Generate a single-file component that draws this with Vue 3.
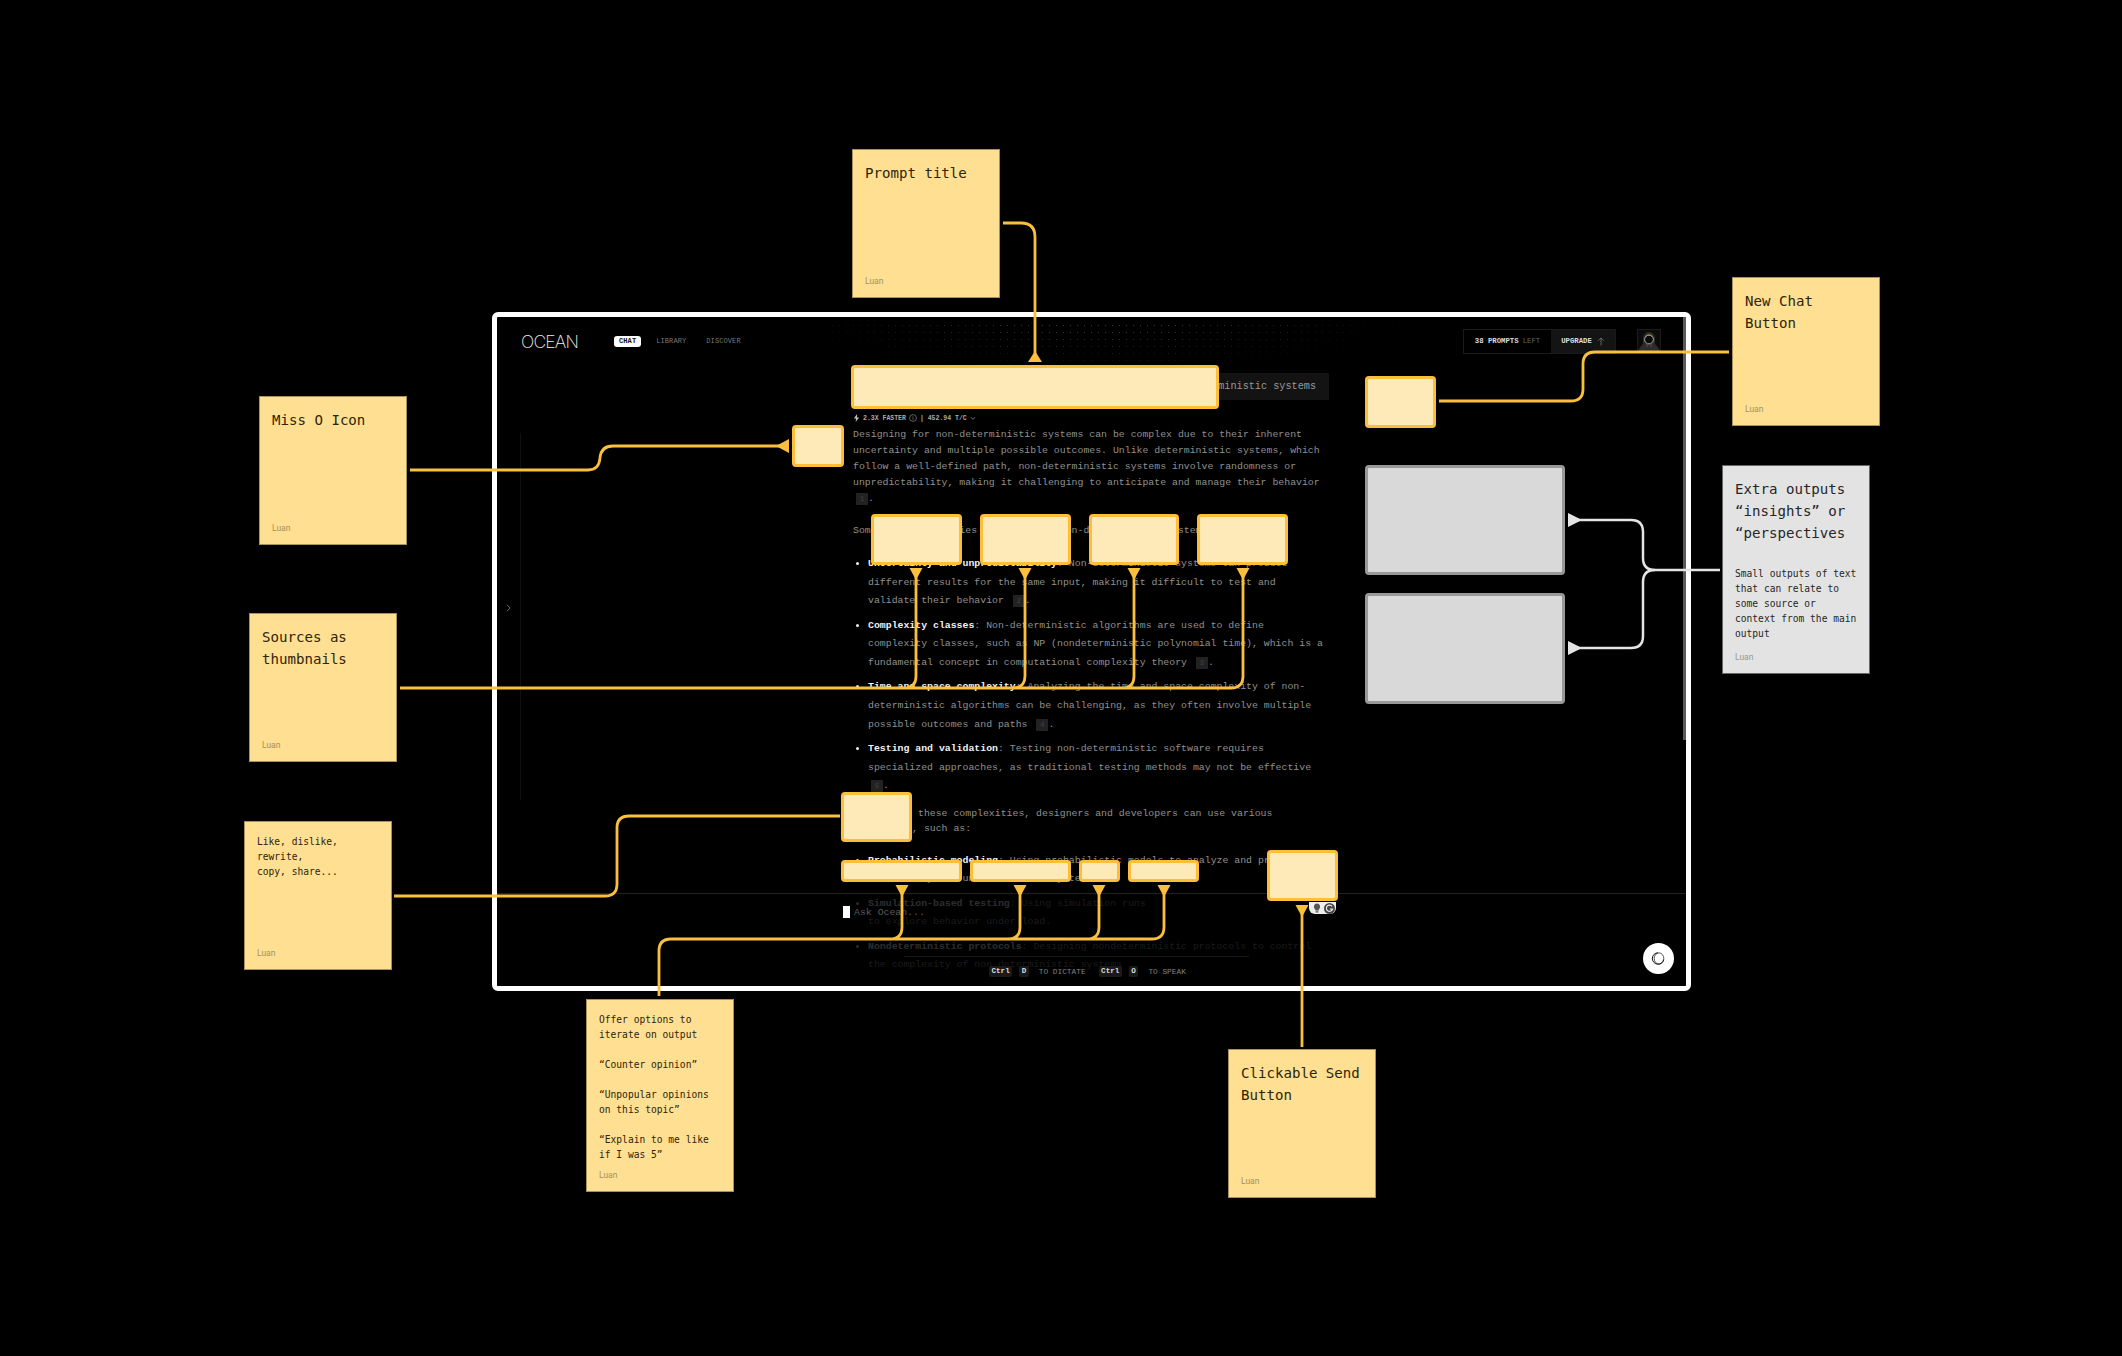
<template>
  <div class="board">
    <div class="window">
      <header class="topbar">
        <div class="logo">OCEAN</div>
        <nav class="nav">
          <a class="nav-item active">CHAT</a>
          <a class="nav-item">LIBRARY</a>
          <a class="nav-item">DISCOVER</a>
        </nav>
        <div class="usage">
          <div class="prompts"><b>38 PROMPTS</b> LEFT</div>
          <div class="upgrade">
            UPGRADE
            <svg width="8" height="9" viewBox="0 0 8 9" fill="none" stroke="#777" stroke-width="0.8"><path d="M4 8.5V1M1.2 3.6 4 1l2.8 2.6" /></svg>
          </div>
        </div>
        <svg class="avatar" width="24" height="24" viewBox="0 0 24 24" fill="none">
          <rect x="0.5" y="0.5" width="23" height="23" fill="#0b0b0b" stroke="#1c1c1c" />
          <path d="M1 24c1-6 4-8 5-9V9a6 6 0 0 1 12 0v6c1 1 4 3 5 9z" fill="#2c2c2c" />
          <circle cx="12" cy="10.5" r="4.4" fill="#0b0b0b" stroke="#a8a8a8" stroke-width="1" />
          <path d="M8.4 7.6A4.8 4.8 0 0 1 15.6 7.6" stroke="#b08a3a" stroke-width="1" />
          <path d="M10 14v4M14 14v4" stroke="#555" stroke-width="1" />
        </svg>
      </header>

      <div class="dots"></div>

      <div class="main">
        <aside class="rail">
          <svg width="5" height="8" viewBox="0 0 5 8" fill="none" stroke="#666" stroke-width="1"><path d="M1 .8 4 4 1 7.2" /></svg>
        </aside>

        <section class="thread">
          <div class="prompt-title">Designing for non-deterministic systems</div>
          <div class="stats">
            <svg width="7" height="8" viewBox="0 0 7 8" fill="#bbb"><path d="M4 0 .8 4.5H3L2.6 8 6.2 3.4H4z" /></svg>
            <span>2.3X FASTER</span>
            <svg width="8" height="8" viewBox="0 0 8 8" fill="none" stroke="#888" stroke-width="0.7"><circle cx="4" cy="4" r="3.4" /><path d="M4 3.4v2.4M4 2v.7" /></svg>
            <span>| 452.94 T/C</span>
            <svg width="6" height="5" viewBox="0 0 6 5" fill="none" stroke="#888" stroke-width="0.8"><path d="M1 1.2 3 3.4 5 1.2" /></svg>
          </div>

          <p class="para">
            Designing for non-deterministic systems can be complex due to their inherent uncertainty and multiple possible outcomes. Unlike deterministic systems, which follow a well-defined path, non-deterministic systems involve randomness or unpredictability, making it challenging to anticipate and manage their behavior <span class="cite">1</span>.
          </p>
          <p class="para lead">Some key complexities in designing non-deterministic systems include:</p>

          <ul class="points">
            <li v-for="item in challenges" :key="item.name">
              <strong>{{ item.name }}</strong>: {{ item.text }} <span class="cite">{{ item.cite }}</span>.
            </li>
          </ul>

          <p class="para lead-two">To address these complexities, designers and developers can use various techniques, such as:</p>

          <ul class="points second-list">
            <li><strong>Probabilistic modeling</strong>: Using probabilistic models to analyze and predict the uncertainty and understand the system.</li>
            <li><strong>Simulation-based testing</strong>: Using simulation runs<br />to explore behavior under load.</li>
            <li><strong>Nondeterministic protocols</strong>: Designing nondeterministic protocols to control the complexity of non-deterministic systems</li>
          </ul>
        </section>
      </div>

      <div class="scrollbar"></div>

      <footer class="composer">
        <div class="ask"><span class="cursor"></span>Ask Ocean...</div>
        <div class="hints">
          <kbd>Ctrl</kbd><kbd>D</kbd><span class="hint-text">TO DICTATE</span>
          <kbd class="second">Ctrl</kbd><kbd>O</kbd><span class="hint-text">TO SPEAK</span>
        </div>
        <button class="new-circle">
          <svg width="15" height="15" viewBox="0 0 15 15" fill="none" stroke="#111" stroke-width="1"><path d="M7 1.8a5.7 5.7 0 1 0 5.6 6.9" /><ellipse cx="8" cy="7.5" rx="4.8" ry="5.6" stroke-width="0.7" /></svg>
        </button>
      </footer>
    </div>

    <!-- annotation cut-outs laid over the product shot -->
    <div
      v-for="box in masks"
      :key="box.id"
      class="mask"
      :class="{ grey: box.grey }"
      :style="{ left: box.x + 'px', top: box.y + 'px', width: box.w + 'px', height: box.h + 'px' }"
    ></div>

    <div class="tools">
      <svg width="10" height="10" viewBox="0 0 10 10" fill="#555"><path d="M5 .6a3.2 3.2 0 0 0-1.8 5.8V7.6h3.6V6.4A3.2 3.2 0 0 0 5 .6zM3.6 8.2h2.8v1.2H3.6z" /></svg>
      <svg width="11" height="11" viewBox="0 0 11 11"><circle cx="5.5" cy="5.5" r="5.5" fill="#444" /><path d="M8 3.4A3.1 3.1 0 1 0 8.5 6H5.8" fill="none" stroke="#eee" stroke-width="1.2" /></svg>
    </div>

    <svg class="wires" width="2122" height="1356" viewBox="0 0 2122 1356" fill="none">
      <g stroke="#fbbf40" stroke-width="2.8">
        <path d="M1003 223H1021Q1035 223 1035 237V354" />
        <path d="M410 470H588Q599 470 600 458Q601 446 613 446H780" />
        <path d="M1439 401H1571Q1583 401 1583 389V364Q1583 352 1595 352H1729" />
        <path d="M400 688H904Q916 688 916 676V572M904 688H1013Q1025 688 1025 676V572M1013 688H1122Q1134 688 1134 676V572M1122 688H1231Q1243 688 1243 676V572" />
        <path d="M394 896H605Q617 896 617 884V828Q617 816 629 816H840" />
        <path d="M659 996V951Q659 939 671 939H890Q902 939 902 927V890M890 939H1008Q1020 939 1020 927V890M1008 939H1087Q1099 939 1099 927V890M1087 939H1152Q1164 939 1164 927V890" />
        <path d="M1302 1047V910" />
      </g>
      <g fill="#fbbf40">
        <polygon points="1035,351 1028,362 1042,362" />
        <polygon points="776,446 789,439 789,453" />
        <polygon v-for="x in [916, 1025, 1134, 1243]" :key="x" :points="`${x - 6.5},568 ${x + 6.5},568 ${x},580`" />
        <polygon v-for="x in [902, 1020, 1099, 1164]" :key="x" :points="`${x - 6.5},885 ${x + 6.5},885 ${x},897`" />
        <polygon points="1295.5,905 1308.5,905 1302,917" />
      </g>
      <g stroke="#e4e4e4" stroke-width="2.5">
        <path d="M1720 570H1655Q1643 570 1643 558V532Q1643 520 1631 520H1578" />
        <path d="M1655 570Q1643 570 1643 582V636Q1643 648 1631 648H1578" />
      </g>
      <g fill="#e4e4e4">
        <polygon points="1568,513 1568,527 1582,520" />
        <polygon points="1568,641 1568,655 1582,648" />
      </g>
    </svg>

    <div
      v-for="note in notes"
      :key="note.id"
      class="sticky"
      :class="{ grey: note.grey }"
      :style="{ left: note.x + 'px', top: note.y + 'px', height: note.h + 'px' }"
    >
      <div v-if="note.title" class="sticky-title">{{ note.title }}</div>
      <div v-if="note.body" class="sticky-body" :class="{ spaced: note.title }">{{ note.body }}</div>
      <div class="sticky-author">Luan</div>
    </div>
  </div>
</template>

<script setup>
const challenges = [
  {
    name: 'Uncertainty and unpredictability',
    text: 'Non-deterministic systems can produce different results for the same input, making it difficult to test and validate their behavior',
    cite: 2,
  },
  {
    name: 'Complexity classes',
    text: 'Non-deterministic algorithms are used to define complexity classes, such as NP (nondeterministic polynomial time), which is a fundamental concept in computational complexity theory',
    cite: 3,
  },
  {
    name: 'Time and space complexity',
    text: 'Analyzing the time and space complexity of non-deterministic algorithms can be challenging, as they often involve multiple possible outcomes and paths',
    cite: 4,
  },
  {
    name: 'Testing and validation',
    text: 'Testing non-deterministic software requires specialized approaches, as traditional testing methods may not be effective',
    cite: 5,
  },
]

const masks = [
  { id: 'title', x: 851, y: 365, w: 368, h: 44 },
  { id: 'icon', x: 792, y: 425, w: 52, h: 42 },
  { id: 's1', x: 871, y: 514, w: 91, h: 51 },
  { id: 's2', x: 980, y: 514, w: 91, h: 51 },
  { id: 's3', x: 1089, y: 514, w: 90, h: 51 },
  { id: 's4', x: 1197, y: 514, w: 91, h: 51 },
  { id: 'new', x: 1365, y: 376, w: 71, h: 52 },
  { id: 'actions', x: 841, y: 792, w: 71, h: 50 },
  { id: 'o1', x: 841, y: 860, w: 121, h: 22 },
  { id: 'o2', x: 970, y: 860, w: 101, h: 22 },
  { id: 'o3', x: 1079, y: 860, w: 41, h: 22 },
  { id: 'o4', x: 1128, y: 860, w: 71, h: 22 },
  { id: 'send', x: 1267, y: 850, w: 71, h: 51 },
  { id: 'g1', x: 1365, y: 465, w: 200, h: 110, grey: true },
  { id: 'g2', x: 1365, y: 593, w: 200, h: 111, grey: true },
]

const notes = [
  { id: 1, x: 852, y: 149, h: 149, title: 'Prompt title' },
  { id: 2, x: 1732, y: 277, h: 149, title: 'New Chat\nButton' },
  { id: 3, x: 259, y: 396, h: 149, title: 'Miss O Icon' },
  { id: 4, x: 249, y: 613, h: 149, title: 'Sources as\nthumbnails' },
  { id: 5, x: 244, y: 821, h: 149, body: 'Like, dislike,\nrewrite,\ncopy, share...' },
  {
    id: 6,
    x: 586,
    y: 999,
    h: 193,
    body: 'Offer options to\niterate on output\n\n“Counter opinion”\n\n“Unpopular opinions\non this topic”\n\n“Explain to me like\nif I was 5”',
  },
  { id: 7, x: 1228, y: 1049, h: 149, title: 'Clickable Send\nButton' },
  {
    id: 8,
    x: 1722,
    y: 465,
    h: 209,
    grey: true,
    title: 'Extra outputs\n“insights” or\n“perspectives',
    body: 'Small outputs of text\nthat can relate to\nsome source or\ncontext from the main\noutput',
  },
]
</script>

<style>
html,
body {
  background: #000;
}
</style>

<style scoped>
.board {
  position: relative;
  width: 2122px;
  height: 1356px;
  overflow: hidden;
  background: #000;
  font-family: "Liberation Mono", monospace;
}

.window {
  position: absolute;
  left: 492px;
  top: 312px;
  width: 1199px;
  height: 679px;
  box-sizing: border-box;
  border: 5px solid #fff;
  border-radius: 6px;
  overflow: hidden;
  display: flex;
  flex-direction: column;
  background: #000;
}

.topbar {
  height: 48px;
  flex-shrink: 0;
  padding: 0 25px 0 24px;
  display: flex;
  align-items: center;
}

.logo {
  width: 57px;
  font-family: Inter, "Liberation Sans", sans-serif;
  font-size: 17.5px;
  font-weight: 200;
  letter-spacing: -0.8px;
  white-space: nowrap;
  color: #eee;
}

.nav {
  margin: 1px 0 0 36px;
  display: flex;
  gap: 10px;
}

.nav-item {
  height: 11px;
  line-height: 11px;
  padding: 0 5px;
  border-radius: 3px;
  font-size: 7px;
  letter-spacing: 0.1px;
  color: #777;
}

.nav-item.active {
  background: #fff;
  color: #111;
  font-weight: 700;
}

.usage {
  margin-left: auto;
  height: 25px;
  display: flex;
  font-size: 7.3px;
  border: 1px solid #1a1a1a;
  box-sizing: border-box;
}

.prompts {
  width: 87px;
  display: flex;
  align-items: center;
  justify-content: center;
  gap: 4px;
  color: #666;
}

.prompts b {
  color: #ddd;
}

.upgrade {
  width: 64px;
  background: #141414;
  color: #ddd;
  font-weight: 700;
  display: flex;
  align-items: center;
  justify-content: center;
  gap: 5px;
}

.avatar {
  margin-left: 21px;
  margin-bottom: 1px;
}

.dots {
  position: absolute;
  left: 283px;
  top: 5px;
  width: 640px;
  height: 48px;
  background-image: radial-gradient(#3a3a3a 0.6px, transparent 0.8px);
  background-size: 7px 7px;
  -webkit-mask-image: radial-gradient(ellipse at 50% 0, #000 15%, transparent 72%);
  mask-image: radial-gradient(ellipse at 50% 0, #000 15%, transparent 72%);
}

.main {
  flex: 1;
  display: flex;
  min-height: 0;
}

.rail {
  width: 24px;
  height: 367px;
  margin-top: 68px;
  padding-top: 171px;
  box-sizing: border-box;
  border-right: 1px solid #101010;
  flex-shrink: 0;
  display: flex;
  align-items: flex-start;
  justify-content: center;
}

.thread {
  width: 476px;
  margin-left: 332px;
  padding-top: 8px;
  font-size: 9.85px;
  color: #909090;
}

.prompt-title {
  height: 27px;
  line-height: 27px;
  padding-right: 13px;
  background: #131313;
  text-align: right;
  font-size: 10.2px;
  color: #999;
}

.stats {
  margin-top: 12px;
  height: 12px;
  display: flex;
  align-items: center;
  gap: 3px;
  font-size: 6.5px;
  font-weight: 700;
  color: #aaa;
}

.para {
  margin: 3.4px 0 0;
  line-height: 15.8px;
}

.lead {
  margin-top: 17px;
}

.lead-two {
  margin-top: 10px;
}

.points {
  margin: 16px 0 0;
  padding: 0 4px 0 15px;
  line-height: 18.6px;
}

.second-list {
  margin-top: 14.5px;
}

.points li {
  margin-bottom: 5.8px;
}

.points li::marker {
  color: #eee;
}

.points strong {
  color: #f2f2f2;
}

.cite {
  display: inline-block;
  width: 12px;
  height: 12px;
  line-height: 12px;
  margin-left: 3px;
  background: #222;
  text-align: center;
  font-size: 7px;
  color: #444;
}

.scrollbar {
  position: absolute;
  right: 0;
  top: 0;
  width: 3px;
  height: 423px;
  background: #5a5a5a;
}

.composer {
  position: absolute;
  left: 0;
  right: 0;
  bottom: 0;
  height: 93px;
  box-sizing: border-box;
  padding-top: 12px;
  border-top: 1px solid #222;
  background: rgba(0, 0, 0, 0.82);
}

.ask {
  margin-left: 346px;
  height: 12px;
  display: flex;
  align-items: center;
  gap: 4px;
  font-size: 9.85px;
  color: #5c5c5c;
}

.cursor {
  width: 7px;
  height: 12px;
  background: #fff;
}

.hints {
  margin: 38px 0 0 407px;
  width: 345px;
  box-sizing: border-box;
  padding: 9px 0 0 85px;
  border-top: 1px solid #191919;
  display: flex;
  align-items: center;
  gap: 7px;
  font-size: 7.8px;
}

.hints kbd {
  height: 11px;
  line-height: 11px;
  padding: 0 2.5px;
  border-radius: 2px;
  background: #1a1a1a;
  font-family: inherit;
  font-size: 7.6px;
  font-weight: 700;
  color: #ddd;
}

.hints .second {
  margin-left: 6px;
}

.hint-text {
  margin-left: 3px;
  color: #808080;
}

.new-circle {
  position: absolute;
  right: 12px;
  bottom: 12px;
  width: 31px;
  height: 31px;
  padding: 0;
  border: none;
  border-radius: 50%;
  background: #fff;
  display: flex;
  align-items: center;
  justify-content: center;
}

.mask {
  position: absolute;
  box-sizing: border-box;
  border: 3px solid #fdbe3a;
  border-radius: 4px;
  background: #feeab8;
}

.mask.grey {
  border-color: #999;
  background: #d9d9d9;
}

.tools {
  position: absolute;
  left: 1309px;
  top: 902px;
  width: 27px;
  height: 12px;
  box-sizing: border-box;
  padding: 0 1px 0 3px;
  border-radius: 0 0 6px 6px;
  background: #eee;
  display: flex;
  align-items: center;
  gap: 2px;
}

.wires {
  position: absolute;
  left: 0;
  top: 0;
  pointer-events: none;
}

.sticky {
  position: absolute;
  width: 148px;
  box-sizing: border-box;
  padding: 12px 11px 11px 12px;
  background: #ffdf92;
  border: 1px solid #a8915a;
  display: flex;
  flex-direction: column;
  font-family: "DejaVu Sans Mono", monospace;
  color: #2e2408;
  white-space: pre-line;
}

.sticky.grey {
  background: #e3e3e3;
  border-color: #666;
  color: #262626;
}

.sticky-title {
  font-size: 14.1px;
  line-height: 22px;
}

.sticky-body {
  font-size: 9.6px;
  line-height: 15px;
}

.sticky-body.spaced {
  margin-top: 22px;
}

.sticky-author {
  margin-top: auto;
  font-family: Roboto, "Liberation Sans", sans-serif;
  font-size: 8.5px;
  line-height: 9px;
  color: #a5925f;
}

.sticky.grey .sticky-author {
  color: #999;
}
</style>
